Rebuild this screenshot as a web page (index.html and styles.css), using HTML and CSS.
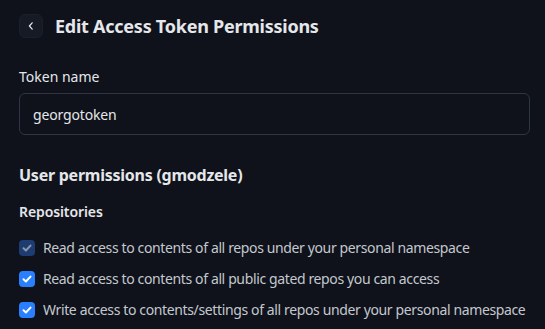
FILE: index.html
```html
<!doctype html>
<html>
<head>
  <meta charset="utf-8">
  <link rel="stylesheet" href="styles.css">
</head>
<body>
  <main class="page">
    <header class="title-row">
      <button class="back" type="button">
        <svg width="10" height="10" viewBox="0 0 10 10"><path d="M6.2 1.8 3.4 5l2.8 3.2" fill="none" stroke="currentColor" stroke-width="1.2" stroke-linecap="round" stroke-linejoin="round"/></svg>
      </button>
      <h1>Edit Access Token Permissions</h1>
    </header>

    <label class="field-label" for="token">Token name</label>
    <input class="field" id="token" type="text" value="georgotoken">

    <h2>User permissions (gmodzele)</h2>
    <h3>Repositories</h3>

    <ul class="perms">
      <li>
        <span class="check disabled"><svg viewBox="0 0 16 16"><path d="M4.5 8.3 6.9 10.5 11.5 5.6" fill="none" stroke="currentColor" stroke-width="2" stroke-linecap="round" stroke-linejoin="round"/></svg></span>
        Read access to contents of all repos under your personal namespace
      </li>
      <li>
        <span class="check"><svg viewBox="0 0 16 16"><path d="M4.5 8.3 6.9 10.5 11.5 5.6" fill="none" stroke="currentColor" stroke-width="2" stroke-linecap="round" stroke-linejoin="round"/></svg></span>
        Read access to contents of all public gated repos you can access
      </li>
      <li>
        <span class="check"><svg viewBox="0 0 16 16"><path d="M4.5 8.3 6.9 10.5 11.5 5.6" fill="none" stroke="currentColor" stroke-width="2" stroke-linecap="round" stroke-linejoin="round"/></svg></span>
        Write access to contents/settings of all repos under your personal namespace
      </li>
    </ul>
  </main>
</body>
</html>
```

FILE: styles.css
```css
html, body {
  margin: 0;
  background: #0f121a;
  color: #d1d5db;
  font-family: "Noto Sans", sans-serif;
  overflow: hidden;
}
.page {
  padding: 14px 15px 0 19px;
  display: flex;
  flex-direction: column;
}
.title-row {
  display: flex;
  align-items: center;
  gap: 12px;
  height: 24px;
}
.back {
  width: 24px;
  height: 24px;
  padding: 0;
  display: flex;
  align-items: center;
  justify-content: center;
  background: #151a24;
  border: 1px solid #1a202b;
  border-radius: 6px;
  color: #e5e7eb;
}
h1 {
  margin: 0;
  font-size: 18px;
  font-weight: 700;
  letter-spacing: -0.25px;
  color: #e5e7eb;
  line-height: 24px;
}
.field-label {
  margin-top: 29px;
  font-size: 14px;
  line-height: 20px;
  color: #e5e7eb;
}
.field {
  margin-top: 6px;
  height: 42px;
  box-sizing: border-box;
  padding: 0 13px;
  background: #0f121a;
  border: 1px solid #2e3643;
  border-radius: 6px;
  color: #e5e7eb;
  font: inherit;
  font-size: 14px;
  letter-spacing: -0.15px;
  outline: none;
}
h2 {
  margin: 28px 0 0;
  font-size: 16px;
  font-weight: 700;
  letter-spacing: -0.25px;
  line-height: 24px;
  color: #e5e7eb;
}
h3 {
  margin: 15px 0 0;
  font-size: 14px;
  font-weight: 600;
  letter-spacing: -0.1px;
  line-height: 20px;
  color: #e5e7eb;
}
.perms {
  list-style: none;
  margin: 16px 0 0;
  padding: 0;
  display: flex;
  flex-direction: column;
  gap: 11px;
}
.perms li {
  display: flex;
  align-items: center;
  gap: 8px;
  font-size: 14px;
  letter-spacing: -0.37px;
  white-space: nowrap;
  line-height: 20px;
  color: #c4c8cf;
}
.check {
  flex: none;
  width: 16px;
  height: 16px;
  border-radius: 4px;
  background: #2a7fff;
  color: #fff;
  display: flex;
}
.check svg {
  width: 16px;
  height: 16px;
}
.check.disabled {
  background: #1d3c72;
  color: #8c97aa;
}
```
